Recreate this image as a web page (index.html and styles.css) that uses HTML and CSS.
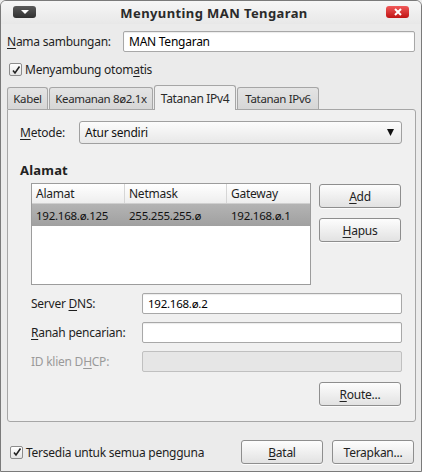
FILE: index.html
```html
<!DOCTYPE html>
<html>
<head>
<meta charset="utf-8">
<link rel="stylesheet" href="styles.css">
</head>
<body>
<div class="window">
  <div class="titlebar">
    <div class="tb-menu"><svg width="8" height="5" viewBox="0 0 8 5"><path d="M0 0h8L4 4z" fill="#fff"/></svg></div>
    <div class="tb-title">Menyunting MAN Tengaran</div>
    <div class="tb-close"><svg width="8" height="8" viewBox="0 0 8 8"><path d="M1 1L7 7M7 1L1 7" stroke="#fff" stroke-width="2"/></svg></div>
  </div>
  <div class="body">
    <div class="name-row">
      <span class="lbl"><u>N</u>ama sambungan:</span>
      <div class="input name-input">MAN Tengaran</div>
    </div>
    <div class="check-row">
      <span class="cb"><svg width="10" height="10" viewBox="0 0 10 10"><path d="M2 5.5L4 8L8.5 1.5" fill="none" stroke="#222" stroke-width="1.6"/></svg></span>
      <span>Menyambung otom<u>a</u>tis</span>
    </div>
    <div class="tabs">
      <div class="tab t1">Kabel</div>
      <div class="tab t2">Keamanan 8ø2.1x</div>
      <div class="tab active t3">Tatanan IPv4</div>
      <div class="tab t4">Tatanan IPv6</div>
    </div>
    <div class="panel">
      <div class="method-row">
        <span class="lbl"><u>M</u>etode:</span>
        <div class="combo"><span>Atur sendiri</span><svg width="7" height="7" viewBox="0 0 7 7"><path d="M0 0h7L3.5 7z" fill="#111"/></svg></div>
      </div>
      <div class="section">Alamat</div>
      <div class="addr-row">
        <div class="table">
          <div class="thead">
            <div class="c c1">Alamat</div>
            <div class="c c2">Netmask</div>
            <div class="c c3">Gateway</div>
          </div>
          <div class="trow sel">
            <div class="c c1">192.168.ø.125</div>
            <div class="c c2">255.255.255.ø</div>
            <div class="c c3">192.168.ø.1</div>
          </div>
        </div>
        <div class="btncol">
          <div class="btn"><u>A</u>dd</div>
          <div class="btn"><u>H</u>apus</div>
        </div>
      </div>
      <div class="field">
        <span class="flbl">Server <u>D</u>NS:</span>
        <div class="input f-input">192.168.ø.2</div>
      </div>
      <div class="field">
        <span class="flbl"><u>R</u>anah pencarian:</span>
        <div class="input f-input"></div>
      </div>
      <div class="field disabled">
        <span class="flbl">ID klien D<u>H</u>CP:</span>
        <div class="input f-input"></div>
      </div>
      <div class="route-row">
        <div class="btn"><u>R</u>oute...</div>
      </div>
    </div>
    <div class="bottom">
      <div class="check-row bcheck">
        <span class="cb"><svg width="10" height="10" viewBox="0 0 10 10"><path d="M2 5.5L4 8L8.5 1.5" fill="none" stroke="#222" stroke-width="1.6"/></svg></span>
        <span>Tersedia untuk semua pengguna</span>
      </div>
      <div class="btn"><u>B</u>atal</div>
      <div class="btn">Terapkan...</div>
    </div>
  </div>
</div>
</body>
</html>
```
FILE: styles.css
```css
* { box-sizing: border-box; }
html, body { margin: 0; padding: 0; background: #ececec; }
body { font-family: "Noto Sans", "DejaVu Sans", sans-serif; font-size: 12px; letter-spacing: -0.25px; color: #1e1e1e; white-space: nowrap; }
u { text-decoration: underline; text-underline-offset: 2px; }

.window {
  width: 422px; height: 472px;
  border: 1px solid #7a7a7a;
  border-radius: 6px 6px 0 0;
  background: #ebebeb;
  overflow: hidden;
  display: flex; flex-direction: column;
}
.titlebar {
  height: 23px; flex: none;
  display: flex; align-items: center;
  padding: 0 12px;
  background: linear-gradient(#f6f6f6, #e8e8e8);
}
.tb-menu {
  width: 23px; height: 12px; border-radius: 3px;
  background: linear-gradient(#5a5a5a, #303030);
  display: flex; align-items: center; justify-content: center;
  margin-top: -1px;
}
.tb-title { flex: 1; text-align: center; font-weight: bold; font-size: 13px; color: #2a2a2a; padding-left: 6px; letter-spacing: 0.4px; }
.tb-close {
  width: 23px; height: 12px; border-radius: 3px;
  background: linear-gradient(#f05858, #c01414);
  display: flex; align-items: center; justify-content: center;
  margin-top: -1px;
}

.body { padding: 0 5px 0 6px; display: flex; flex-direction: column; flex: 1; }
.name-row { display: flex; align-items: center; margin-top: 7px; height: 21px; }
.name-row .lbl { width: 116px; }
.input {
  background: #fff; border: 1px solid #a8a8a8; border-radius: 2px;
  height: 21px; display: flex; align-items: center; padding: 0 5px;
  box-shadow: inset 0 1px 1px rgba(0,0,0,0.08);
}
.name-input { width: 292px; color: #000; }

.check-row { display: flex; align-items: center; gap: 3px; margin-top: 9px; height: 17px; }
.cb {
  width: 13px; height: 13px; border: 1px solid #8c8c8c; border-radius: 2px;
  background: linear-gradient(#fff, #e4e4e4);
  display: flex; align-items: center; justify-content: center;
  margin-left: 2px;
}

.tabs { display: flex; align-items: flex-end; margin-top: 7px; height: 24px; position: relative; z-index: 1; }
.tab {
  height: 22px; border: 1px solid #a6a6a6; border-bottom: none;
  border-radius: 3px 3px 0 0;
  background: linear-gradient(#e4e4e4, #d6d6d6);
  padding: 0 3px; display: flex; align-items: center; justify-content: center;
  margin-right: 1px; color: #2a2a2a;
  font-size: 11.5px; letter-spacing: -0.35px;
  flex: none; min-width: 0; overflow: hidden;
}
.tab.active { height: 25px; background: #f0f0f0; margin-bottom: -1px; font-size: 12px; }
.t1 { width: 41px; }
.t2 { width: 104px; }
.t3 { width: 82px; }
.t4 { width: 82px; }

.panel {
  width: 409px; height: 313px;
  border: 1px solid #a6a6a6; border-radius: 0 3px 3px 3px;
  background: #f0f0f0;
  padding: 11px 13px 0 12px;
  display: flex; flex-direction: column;
}
.method-row { display: flex; align-items: center; height: 23px; }
.method-row .lbl { width: 59px; }
.combo {
  flex: 1; height: 23px; border: 1px solid #a0a0a0; border-radius: 3px;
  background: linear-gradient(#fcfcfc, #e8e8e8);
  display: flex; align-items: center; justify-content: space-between;
  padding: 0 7px 0 5px; color: #111;
}
.section { font-weight: bold; font-size: 13px; margin-top: 17px; height: 22px; color: #222; letter-spacing: 0.2px; }

.addr-row { display: flex; margin-left: 11px; height: 102px; }
.table {
  width: 280px; height: 102px; border: 1px solid #9c9c9c; background: #fff;
}
.thead { display: flex; height: 20px; background: linear-gradient(#ffffff, #eeeeee); border-bottom: 1px solid #d0d0d0; }
.thead .c { border-right: 1px solid #d6d6d6; }
.thead .c3 { border-right: none; }
.c { display: flex; align-items: center; padding-left: 4px; }
.c1 { width: 93px; }
.c2 { width: 102px; }
.c3 { flex: 1; }
.trow { display: flex; height: 22px; font-size: 11.5px; }
.trow.sel { background: linear-gradient(#b4b4b4, #a0a0a0); color: #111; }

.btncol { margin-left: 8px; display: flex; flex-direction: column; gap: 10px; padding-top: 1px; }
.btn {
  width: 82px; height: 24px; border: 1px solid #8e8e8e; border-radius: 3px;
  background: linear-gradient(#fdfdfd, #e2e2e2);
  display: flex; align-items: center; justify-content: center; color: #222;
  box-shadow: 0 1px 0 rgba(255,255,255,0.8);
  flex: none;
}

.field { display: flex; align-items: center; height: 21px; margin-left: 11px; margin-top: 8px; }
.addr-row + .field { margin-top: 8px; }
.flbl { width: 111px; }
.f-input { width: 260px; font-size: 11.5px; color: #000; }
.disabled .flbl { color: #9a9a9a; }
.disabled .input { background: #e6e6e6; border-color: #c0c0c0; box-shadow: none; }

.route-row { display: flex; justify-content: flex-end; margin-top: 10px; padding-right: 1px; }

.bottom { display: flex; align-items: center; margin-top: 18px; height: 24px; }
.bcheck { margin-top: 0; flex: 1; margin-left: 1px; }
.bottom .btn + .btn { margin-left: 9px; }
.bottom .btn:last-child { margin-right: 2px; }
```
